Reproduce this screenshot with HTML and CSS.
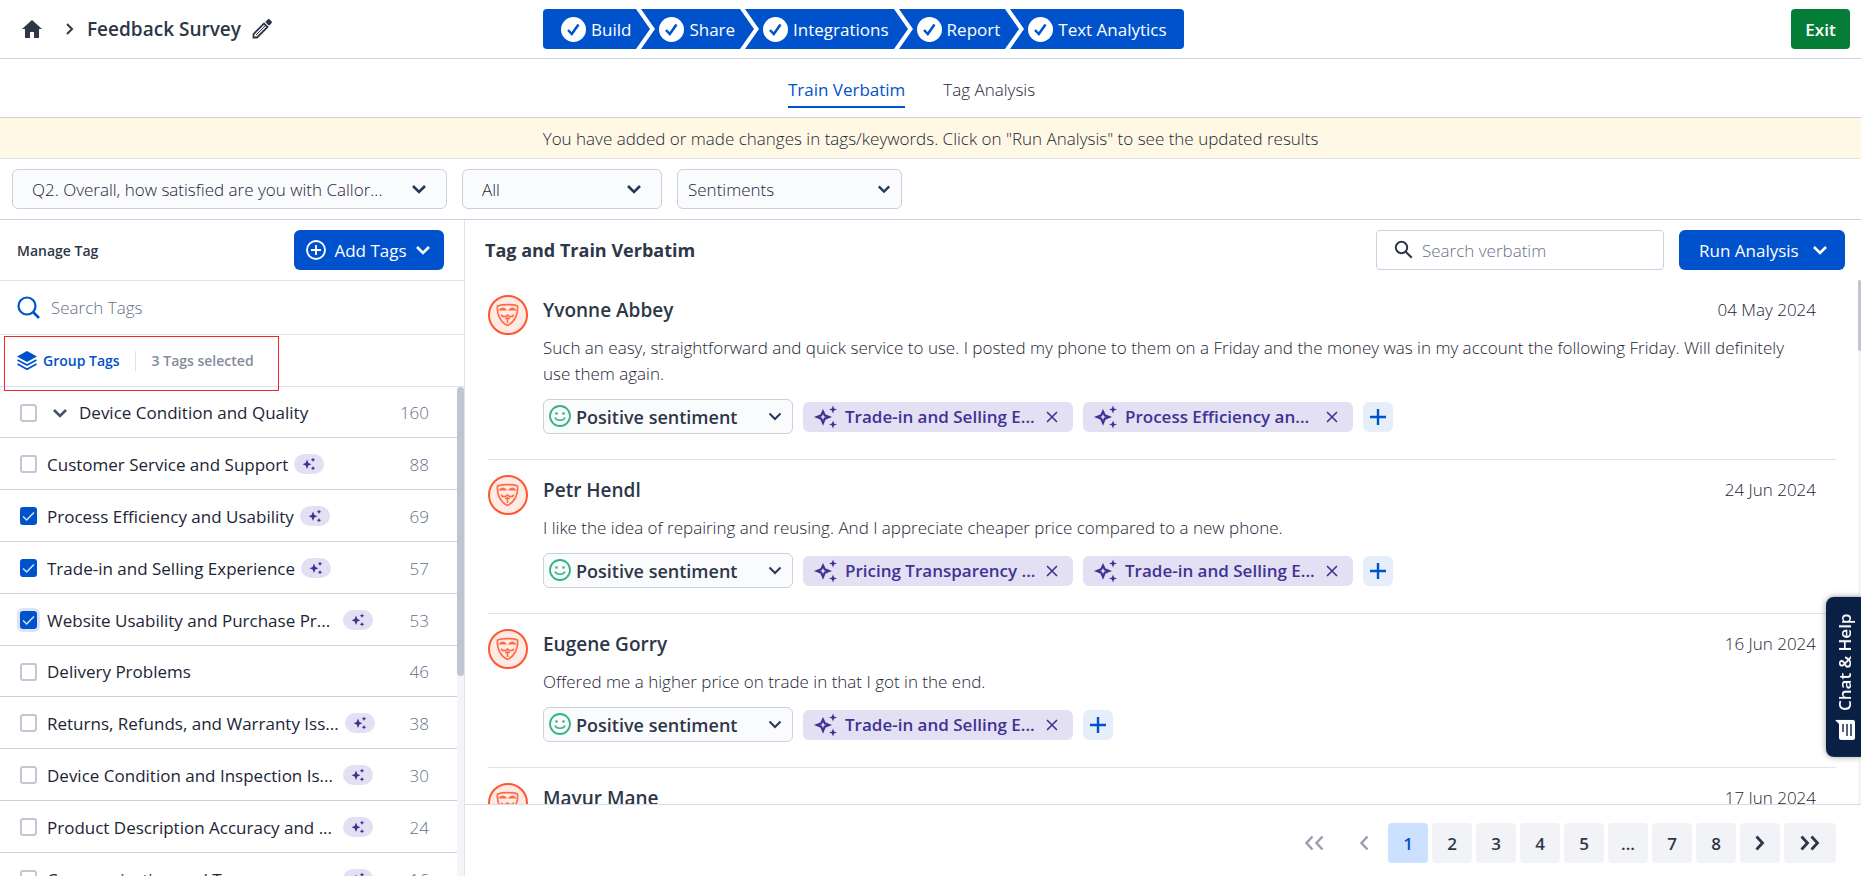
FILE: index.html
```html
<!DOCTYPE html>
<html lang="en">
<head>
  <meta charset="UTF-8" />
  <meta name="viewport" content="width=device-width, initial-scale=1.0" />
  <title>Feedback Survey - Text Analytics</title>
  <link rel="stylesheet" href="styles.css">
</head>
<body>

  <!-- icon set -->
  <svg class="icon-defs" aria-hidden="true">
    <symbol id="i-chevron" viewBox="0 0 16 10"><path d="M2 2l6 6 6-6" fill="none" stroke="currentColor" stroke-width="2.6"/></symbol>
    <symbol id="i-chevron-thin" viewBox="0 0 14 9"><path d="M1.5 1.5L7 7l5.500-5.500" fill="none" stroke="currentColor" stroke-width="2"/></symbol>
    <symbol id="i-check" viewBox="0 0 25 25"><circle cx="12.500" cy="12.500" r="12.500" fill="#fff"/><path d="M7 13l3.800 4L17.500 7.500" fill="none" stroke="#0052cc" stroke-width="2.500"/></symbol>
    <symbol id="i-sep" viewBox="0 0 21 40"><path d="M0 0H1L15 20 1 40H0z" fill="#0052cc"/><path d="M6 0H21V40H6L20 20z" fill="#0052cc"/></symbol>
    <symbol id="i-stars" viewBox="0 0 24 24"><path d="M9 6.500l1.800 3.900 4.200 1.600-4.200 1.700L9 18l-1.800-4.300L3 12l4.200-1.600z" fill="none" stroke="currentColor" stroke-width="2.200"/><path d="M19 .5l1.100 2.900L23 4.500l-2.900 1.100L19 8.500l-1.100-2.900L15 4.500l2.900-1.100zM19 15.500l1.100 2.900 2.900 1.100-2.900 1.100-1.100 2.900-1.100-2.900-2.900-1.100 2.900-1.100z" fill="currentColor"/></symbol>
    <symbol id="i-stars-solid" viewBox="0 0 14 14"><path d="M5 2.500l1.400 3.400L9.500 7.200 6.400 8.500 5 12 3.600 8.500.5 7.200l3.100-1.300zM11 .5l.7 1.600 1.600.7-1.600.7L11 5l-.7-1.500-1.600-.7 1.600-.7zM11 9l.7 1.600 1.600.7-1.600.7-.7 1.600-.7-1.600-1.600-.7 1.600-.7z" fill="currentColor"/></symbol>
    <symbol id="i-close" viewBox="0 0 12 12"><path d="M1 1l10 10M11 1L1 11" fill="none" stroke="currentColor" stroke-width="1.600"/></symbol>
    <symbol id="i-plus" viewBox="0 0 18 18"><path d="M9 1v16M1 9h16" fill="none" stroke="currentColor" stroke-width="2.400"/></symbol>
    <symbol id="i-smile" viewBox="0 0 22 22"><circle cx="11" cy="11" r="10" fill="none" stroke="currentColor" stroke-width="1.800"/><path d="M6 12.500c1.500 3.700 8.500 3.700 10 0" fill="none" stroke="currentColor" stroke-width="1.500"/><circle cx="7.500" cy="8.500" r="1.300" fill="currentColor"/><circle cx="14.500" cy="8.500" r="1.300" fill="currentColor"/></symbol>
    <symbol id="i-avatar" viewBox="0 0 40 40">
      <circle cx="20" cy="20" r="19" fill="#ffebe6" stroke="#ff5630" stroke-width="2"/>
      <path d="M9.500 11c5-1.800 16-1.800 20 0 .8 8-2.500 16-10 19.500C12 27 8.700 19 9.500 11z" fill="none" stroke="#ff6b45" stroke-width="1.700" stroke-linejoin="round"/>
      <path d="M12 14.800c1.500-2 4-2 5.500 0zM21.500 14.800c1.500-2 4-2 5.500 0zM13.500 19.500c0 3 4.500 2.500 6 .5 1.500 2 6 2.500 6-.5M17 23.500h5M19.500 22v6" fill="none" stroke="#ff6b45" stroke-width="1.600"/>
    </symbol>
    <symbol id="i-search" viewBox="0 0 20 20"><circle cx="7.500" cy="7.500" r="5.700" fill="none" stroke="currentColor" stroke-width="2"/><path d="M11.700 11.700l6 6" stroke="currentColor" stroke-width="2.200"/></symbol>
    <symbol id="i-left" viewBox="0 0 10 16"><path d="M8.500 1.500L2.500 8l6 6.500" fill="none" stroke="currentColor" stroke-width="2.500"/></symbol>
    <symbol id="i-right" viewBox="0 0 10 16"><path d="M1.500 1.500L7.500 8l-6 6.500" fill="none" stroke="currentColor" stroke-width="2.800"/></symbol>
  </svg>

  <header class="topbar">
    <div class="crumbs">
      <a href="#" class="home" aria-label="Home"><svg width="20" height="18" viewBox="0 0 20 18"><path d="M10 0L0 9h3v9h5v-6h4v6h5V9h3z" fill="currentColor"/></svg></a>
      <svg class="crumb-arrow" width="8" height="12" viewBox="0 0 8 12"><path d="M1 1l5 5-5 5" fill="none" stroke="currentColor" stroke-width="2"/></svg>
      <h1>Feedback Survey</h1>
      <button class="plain" aria-label="Rename"><svg width="20" height="20" viewBox="0 0 20 20"><path d="M1.500 18.500V15L12 4.500 15.500 8 5 18.500z" fill="none" stroke="currentColor" stroke-width="1.800"/><path d="M4 16L13 7" stroke="currentColor" stroke-width="1"/><path d="M13.300 3l2.500-2.500c.6-.6 1.300-.6 1.900 0l1.800 1.800c.6.600.6 1.300 0 1.900L17 6.700z" fill="currentColor"/></svg></button>
    </div>
    <nav class="stepper">
      <a href="#"><svg class="check"><use href="#i-check"/></svg>Build</a>
      <svg class="sep"><use href="#i-sep"/></svg>
      <a href="#"><svg class="check"><use href="#i-check"/></svg>Share</a>
      <svg class="sep"><use href="#i-sep"/></svg>
      <a href="#"><svg class="check"><use href="#i-check"/></svg>Integrations</a>
      <svg class="sep"><use href="#i-sep"/></svg>
      <a href="#"><svg class="check"><use href="#i-check"/></svg>Report</a>
      <svg class="sep"><use href="#i-sep"/></svg>
      <a href="#"><svg class="check"><use href="#i-check"/></svg>Text Analytics</a>
    </nav>
    <button class="exit">Exit</button>
  </header>

  <nav class="tabs">
    <a href="#" class="tab current">Train Verbatim</a>
    <a href="#" class="tab">Tag Analysis</a>
  </nav>

  <div class="notice">You have added or made changes in tags/keywords. Click on "Run Analysis" to see the updated results</div>

  <div class="filters">
    <div class="select question">
      <select aria-label="Question"><option>Q2. Overall, how satisfied are you with Callor...</option></select>
      <svg class="chev"><use href="#i-chevron"/></svg>
    </div>
    <div class="select scope">
      <select aria-label="Responses"><option>All</option></select>
      <svg class="chev"><use href="#i-chevron"/></svg>
    </div>
    <div class="select sentiments">
      <select aria-label="Sentiments"><option>Sentiments</option></select>
      <svg class="chev"><use href="#i-chevron"/></svg>
    </div>
  </div>

  <div class="workspace">

    <aside class="sidebar">
      <div class="manage">
        <h2>Manage Tag</h2>
        <button class="btn add"><svg width="20" height="20" viewBox="0 0 20 20"><circle cx="10" cy="10" r="9" fill="none" stroke="#fff" stroke-width="1.800"/><path d="M10 5v10M5 10h10" stroke="#fff" stroke-width="1.800"/></svg>Add Tags<svg class="chev"><use href="#i-chevron"/></svg></button>
      </div>
      <div class="tag-search">
        <svg width="23" height="23" viewBox="0 0 23 23"><circle cx="10" cy="10" r="8.500" fill="none" stroke="#0052cc" stroke-width="2.200"/><path d="M16 16l6 6" stroke="#0052cc" stroke-width="2.600"/></svg>
        <input type="text" placeholder="Search Tags" aria-label="Search Tags">
      </div>
      <div class="group">
        <button class="group-btn"><svg width="20" height="20" viewBox="0 0 20 20"><path d="M10 0l10 5.500L10 11 0 5.500z" fill="#0052cc"/><path d="M.5 9L10 14l9.500-5M.5 13L10 18.300 19.500 13" fill="none" stroke="#0052cc" stroke-width="1.700"/></svg>Group Tags</button>
        <span class="selected">3 Tags selected</span>
        <div class="highlight"></div>
      </div>
      <div class="tag-scroll">
        <ul class="tag-list">
          <li>
            <input type="checkbox" id="t1"><button class="plain expand" aria-label="Expand"><svg class="chev"><use href="#i-chevron"/></svg></button>
            <label for="t1">Device Condition and Quality</label><span class="count">160</span>
          </li>
          <li><input type="checkbox" id="t2"><label for="t2">Customer Service and Support</label><span class="ai"><svg><use href="#i-stars-solid"/></svg></span><span class="count">88</span></li>
          <li><input type="checkbox" id="t3" checked><label for="t3">Process Efficiency and Usability</label><span class="ai"><svg><use href="#i-stars-solid"/></svg></span><span class="count">69</span></li>
          <li><input type="checkbox" id="t4" checked><label for="t4">Trade-in and Selling Experience</label><span class="ai"><svg><use href="#i-stars-solid"/></svg></span><span class="count">57</span></li>
          <li><input type="checkbox" id="t5" class="focused" checked><label for="t5" class="long">Website Usability and Purchase Pr...</label><span class="ai"><svg><use href="#i-stars-solid"/></svg></span><span class="count">53</span></li>
          <li><input type="checkbox" id="t6"><label for="t6">Delivery Problems</label><span class="count">46</span></li>
          <li><input type="checkbox" id="t7"><label for="t7" class="long">Returns, Refunds, and Warranty Iss...</label><span class="ai"><svg><use href="#i-stars-solid"/></svg></span><span class="count">38</span></li>
          <li><input type="checkbox" id="t8"><label for="t8" class="long">Device Condition and Inspection Is...</label><span class="ai"><svg><use href="#i-stars-solid"/></svg></span><span class="count">30</span></li>
          <li><input type="checkbox" id="t9"><label for="t9" class="long">Product Description Accuracy and ...</label><span class="ai"><svg><use href="#i-stars-solid"/></svg></span><span class="count">24</span></li>
          <li><input type="checkbox" id="t10"><label for="t10" class="long">Communication and Transparen...</label><span class="ai"><svg><use href="#i-stars-solid"/></svg></span><span class="count">16</span></li>
        </ul>
        <div class="track"><div class="thumb"></div></div>
      </div>
    </aside>

    <main class="main">
      <div class="main-head">
        <h2>Tag and Train Verbatim</h2>
        <div class="search">
          <svg width="20" height="20"><use href="#i-search"/></svg>
          <input type="text" placeholder="Search verbatim" aria-label="Search verbatim">
        </div>
        <button class="btn run">Run Analysis<svg class="chev"><use href="#i-chevron"/></svg></button>
      </div>

      <div class="verbatims">
        <div class="list">
          <article class="item">
            <svg class="avatar"><use href="#i-avatar"/></svg>
            <div class="body">
              <div class="who"><h3>Yvonne Abbey</h3><time>04 May 2024</time></div>
              <p>Such an easy, straightforward and quick service to use. I posted my phone to them on a Friday and the money was in my account the following Friday. Will definitely use them again.</p>
              <div class="tags">
                <div class="sentiment"><svg class="smile"><use href="#i-smile"/></svg><select aria-label="Sentiment"><option>Positive sentiment</option></select><svg class="chev-sm"><use href="#i-chevron-thin"/></svg></div>
                <div class="chip"><svg class="stars"><use href="#i-stars"/></svg><span>Trade-in and Selling E...</span><button class="plain" aria-label="Remove tag"><svg class="x"><use href="#i-close"/></svg></button></div>
                <div class="chip"><svg class="stars"><use href="#i-stars"/></svg><span>Process Efficiency an...</span><button class="plain" aria-label="Remove tag"><svg class="x"><use href="#i-close"/></svg></button></div>
                <button class="plus" aria-label="Add tag"><svg><use href="#i-plus"/></svg></button>
              </div>
            </div>
          </article>
          <article class="item">
            <svg class="avatar"><use href="#i-avatar"/></svg>
            <div class="body">
              <div class="who"><h3>Petr Hendl</h3><time>24 Jun 2024</time></div>
              <p>I like the idea of repairing and reusing. And I appreciate cheaper price compared to a new phone.</p>
              <div class="tags">
                <div class="sentiment"><svg class="smile"><use href="#i-smile"/></svg><select aria-label="Sentiment"><option>Positive sentiment</option></select><svg class="chev-sm"><use href="#i-chevron-thin"/></svg></div>
                <div class="chip"><svg class="stars"><use href="#i-stars"/></svg><span>Pricing Transparency ...</span><button class="plain" aria-label="Remove tag"><svg class="x"><use href="#i-close"/></svg></button></div>
                <div class="chip"><svg class="stars"><use href="#i-stars"/></svg><span>Trade-in and Selling E...</span><button class="plain" aria-label="Remove tag"><svg class="x"><use href="#i-close"/></svg></button></div>
                <button class="plus" aria-label="Add tag"><svg><use href="#i-plus"/></svg></button>
              </div>
            </div>
          </article>
          <article class="item">
            <svg class="avatar"><use href="#i-avatar"/></svg>
            <div class="body">
              <div class="who"><h3>Eugene Gorry</h3><time>16 Jun 2024</time></div>
              <p>Offered me a higher price on trade in that I got in the end.</p>
              <div class="tags">
                <div class="sentiment"><svg class="smile"><use href="#i-smile"/></svg><select aria-label="Sentiment"><option>Positive sentiment</option></select><svg class="chev-sm"><use href="#i-chevron-thin"/></svg></div>
                <div class="chip"><svg class="stars"><use href="#i-stars"/></svg><span>Trade-in and Selling E...</span><button class="plain" aria-label="Remove tag"><svg class="x"><use href="#i-close"/></svg></button></div>
                <button class="plus" aria-label="Add tag"><svg><use href="#i-plus"/></svg></button>
              </div>
            </div>
          </article>
          <article class="item">
            <svg class="avatar"><use href="#i-avatar"/></svg>
            <div class="body">
              <div class="who"><h3>Mayur Mane</h3><time>17 Jun 2024</time></div>
            </div>
          </article>
        </div>
        <div class="track slim"><div class="thumb"></div></div>
      </div>

      <footer class="pager">
        <button class="nav first" aria-label="First page" disabled><svg><use href="#i-left"/></svg><svg><use href="#i-left"/></svg></button>
        <button class="nav prev" aria-label="Previous page" disabled><svg><use href="#i-left"/></svg></button>
        <button class="page active">1</button>
        <button class="page">2</button>
        <button class="page">3</button>
        <button class="page">4</button>
        <button class="page">5</button>
        <button class="page">...</button>
        <button class="page">7</button>
        <button class="page">8</button>
        <button class="page" aria-label="Next page"><svg><use href="#i-right"/></svg></button>
        <button class="page last" aria-label="Last page"><svg><use href="#i-right"/></svg><svg><use href="#i-right"/></svg></button>
      </footer>
    </main>
  </div>

  <button class="chat"><svg width="20" height="20" viewBox="0 0 20 20"><path d="M2 0h12a2 2 0 012 2v14l4 4H2a2 2 0 01-2-2V2a2 2 0 012-2z" fill="#fff"/><path d="M4 4v12M8 4v12M12 8v8" stroke="#0a1f44" stroke-width="1.400"/></svg>Chat &amp; Help</button>

</body>
</html>
```

FILE: styles.css
```css
* {
  margin: 0;
  padding: 0;
  box-sizing: border-box;
}

html, body {
  height: 100%;
}

body {
  display: flex;
  flex-direction: column;
  overflow: hidden;
  font-family: 'Segoe UI', 'Open Sans', 'Noto Sans', sans-serif;
  font-size: 17px;
  font-weight: 300;
  color: #1c2536;
  background-color: #fff;
}

button, input, select {
  font: inherit;
  color: inherit;
}

button {
  border: none;
  cursor: pointer;
}

a {
  color: inherit;
  text-decoration: none;
}

svg {
  flex: none;
  display: block;
}

.icon-defs {
  position: absolute;
  width: 0;
  height: 0;
}

.plain {
  background: none;
}

.chev {
  width: 16px;
  height: 10px;
}

/* top bar */
.topbar {
  flex: none;
  display: flex;
  align-items: center;
  height: 59px;
  padding-right: 11px;
  border-bottom: 1px solid #cbd0e0;
}

.crumbs {
  display: flex;
  align-items: center;
  flex: 0 0 543px;
  padding-left: 22px;
  color: #2d3748;
}

.crumb-arrow {
  margin: 0 13px 0 24px;
}

.crumbs h1 {
  font-size: 19px;
  font-weight: 600;
  margin-right: 11px;
}

.stepper {
  display: flex;
  height: 40px;
  border-radius: 4px;
  overflow: hidden;
}

.stepper a {
  display: flex;
  align-items: center;
  gap: 5px;
  padding: 0 4px 0 3px;
  background-color: #0052cc;
  color: #fff;
  font-weight: 500;
}

.stepper a:first-child {
  padding-left: 18px;
}

.stepper a:last-child {
  padding-right: 17px;
}

.check {
  width: 25px;
  height: 25px;
}

.sep {
  width: 21px;
  height: 40px;
}

.exit {
  margin-left: auto;
  width: 59px;
  height: 40px;
  border-radius: 4px;
  background-color: #067d37;
  color: #fff;
  font-weight: 600;
}

/* tabs */
.tabs {
  flex: none;
  display: flex;
  justify-content: center;
  gap: 38px;
  height: 59px;
  padding: 15px 38px 0 0;
  border-bottom: 1px solid #cbd0e0;
}

.tab {
  height: 34px;
  line-height: 32px;
}

.tab.current {
  color: #0052cc;
  font-weight: 500;
  border-bottom: 2px solid #0052cc;
}

.notice {
  flex: none;
  height: 41px;
  line-height: 42px;
  text-align: center;
  background-color: #fff8e5;
  border-bottom: 1px solid #dfe1ec;
}

/* filters */
.filters {
  flex: none;
  display: flex;
  gap: 15px;
  padding: 10px 12px;
  border-bottom: 1px solid #cbd0e0;
}

.select {
  position: relative;
  height: 40px;
}

.select select {
  appearance: none;
  width: 100%;
  height: 100%;
  padding-left: 19px;
  border: 1px solid #cbd0e0;
  border-radius: 6px;
  background-color: #fafbfd;
}

.select .chev {
  position: absolute;
  right: 20px;
  top: 15px;
  color: #253858;
  pointer-events: none;
}

.question { width: 435px; }
.scope { width: 200px; }
.sentiments { width: 225px; }

.sentiments select {
  padding-left: 10px;
}

.sentiments .chev {
  right: 11px;
  width: 14px;
}

.workspace {
  flex: 1;
  display: flex;
  min-height: 0;
}

/* sidebar */
.sidebar {
  flex: none;
  display: flex;
  flex-direction: column;
  width: 465px;
  border-right: 1px solid #dfe3ee;
}

.manage, .tag-search, .group {
  flex: none;
  display: flex;
  align-items: center;
  padding-left: 17px;
  border-bottom: 1px solid #dfe3ee;
}

.manage {
  height: 61px;
  padding-right: 20px;
  justify-content: space-between;
}

.manage h2 {
  font-size: 14px;
  font-weight: 600;
  color: #2d3748;
}

.btn {
  display: flex;
  align-items: center;
  height: 40px;
  border-radius: 6px;
  background-color: #0052cc;
  color: #fff;
  font-weight: 400;
}

.add {
  width: 150px;
  padding: 0 13px 0 12px;
  justify-content: space-between;
}

.tag-search {
  height: 54px;
  gap: 11px;
}

.tag-search input {
  flex: 1;
  min-width: 0;
  border: none;
  outline: none;
}

::placeholder {
  color: #667085;
  opacity: 1;
}

.group {
  position: relative;
  height: 52px;
  font-size: 14px;
  font-weight: 600;
}

.group-btn {
  display: flex;
  align-items: center;
  gap: 6px;
  padding-right: 15px;
  background: none;
  color: #0052cc;
  border-right: 1px solid #dfe3ee;
}

.selected {
  padding-left: 16px;
  color: #858c9c;
}

.highlight {
  position: absolute;
  left: 4px;
  top: 1px;
  width: 275px;
  height: 55px;
  border: 1px solid #f02828;
  z-index: 1;
}

.tag-scroll {
  flex: 1;
  display: flex;
  min-height: 0;
}

.tag-list {
  flex: 1;
  list-style: none;
  overflow: hidden;
}

.tag-list li {
  display: flex;
  align-items: center;
  height: 52px;
  padding: 1px 28px 0 20px;
  border-bottom: 1px solid #cbd0e0;
  font-weight: 500;
  white-space: nowrap;
}

/* rows without a badge are slightly shorter */
.tag-list li:not(:has(.ai)) {
  height: 51px;
}

.tag-list input {
  appearance: none;
  width: 17px;
  height: 18px;
  margin-right: 10px;
  border: 2px solid #c1c7d3;
  border-radius: 3px;
  background-color: #fff;
}

.tag-list input:checked {
  border-color: #0052cc;
  background: #0052cc url("data:image/svg+xml,%3Csvg xmlns='http://www.w3.org/2000/svg' viewBox='0 0 14 14'%3E%3Cpath d='M1.500 7.500l3.500 3.500 7-7.500' fill='none' stroke='%23cfe0fa' stroke-width='1.500'/%3E%3C/svg%3E") center / 14px no-repeat;
}

.tag-list input.focused {
  box-shadow: 0 0 0 3px #dfe3f6;
}

.expand {
  margin: 0 11px 0 5px;
  color: #42526e;
}

.long {
  min-width: 290px;
}

.ai {
  display: flex;
  align-items: center;
  justify-content: center;
  width: 30px;
  height: 20px;
  margin-left: 6px;
  border-radius: 10px;
  background-color: #e4e0f3;
  color: #403294;
}

.ai svg {
  width: 14px;
  height: 14px;
}

.count {
  margin-left: auto;
  color: #667085;
  font-weight: 300;
}

.track {
  width: 7px;
  background-color: #f4f5f8;
}

.thumb {
  height: 59%;
  border-radius: 4px;
  background-color: #c0c6d1;
}

/* main column */
.main {
  flex: 1;
  display: flex;
  flex-direction: column;
  min-width: 0;
}

.main-head {
  flex: none;
  display: flex;
  align-items: center;
  height: 60px;
  padding: 0 16px 0 20px;
}

.main-head h2 {
  font-size: 18px;
  font-weight: 700;
  color: #2d3748;
}

.search {
  display: flex;
  align-items: center;
  gap: 8px;
  width: 288px;
  height: 40px;
  margin: 0 15px 0 auto;
  padding-left: 17px;
  border: 1px solid #cbd0e0;
  border-radius: 4px;
  color: #2d3748;
}

.search input {
  flex: 1;
  min-width: 0;
  border: none;
  outline: none;
}

.run {
  width: 166px;
  padding: 0 17px 0 20px;
  justify-content: space-between;
}

.verbatims {
  flex: 1;
  display: flex;
  min-height: 0;
}

.list {
  flex: 1;
  padding: 0 22px 0 23px;
  overflow: hidden;
}

.slim {
  width: 3px;
}

.slim .thumb {
  height: 71px;
}

.item {
  display: flex;
  gap: 15px;
  padding: 15px 20px 25px 0;
  border-bottom: 1px solid #dfe3ee;
}

.avatar {
  width: 40px;
  height: 40px;
}

.body {
  flex: 1;
}

.who {
  display: flex;
  justify-content: space-between;
  height: 30px;
  line-height: 30px;
}

.who h3 {
  font-size: 19px;
  font-weight: 600;
  color: #2d3748;
}

.item p {
  margin: 10px 0 12px;
  padding-right: 8px;
  line-height: 26px;
}

.tags {
  display: flex;
  align-items: center;
  gap: 10px;
}

.sentiment {
  position: relative;
  width: 250px;
  height: 35px;
}

.sentiment select {
  appearance: none;
  width: 100%;
  height: 100%;
  padding-left: 32px;
  border: 1px solid #cbd0e0;
  border-radius: 6px;
  background-color: #fafbfd;
  font-size: 18px;
  font-weight: 600;
  color: #2d3748;
}

.smile {
  position: absolute;
  left: 6px;
  top: 6px;
  width: 22px;
  height: 22px;
  color: #36b37e;
}

.chev-sm {
  position: absolute;
  right: 11px;
  top: 13px;
  width: 14px;
  height: 9px;
  color: #253858;
  pointer-events: none;
}

.chip {
  display: flex;
  align-items: center;
  width: 270px;
  height: 30px;
  padding: 0 15px 0 11px;
  border-radius: 6px;
  background-color: #e4e0f3;
  color: #403294;
  font-weight: 600;
}

.stars {
  width: 24px;
  height: 24px;
  margin-right: 7px;
}

.chip button {
  margin-left: auto;
  color: #403294;
}

.x {
  width: 12px;
  height: 12px;
}

.plus {
  display: flex;
  align-items: center;
  justify-content: center;
  width: 30px;
  height: 30px;
  border-radius: 6px;
  background-color: #e6eefa;
  color: #0052cc;
}

.plus svg {
  width: 18px;
  height: 18px;
}

/* pagination */
.pager {
  flex: none;
  display: flex;
  justify-content: flex-end;
  gap: 4px;
  padding: 18px 25px 13px;
  border-top: 1px solid #d8dbe5;
}

.pager button {
  display: flex;
  align-items: center;
  justify-content: center;
  width: 40px;
  height: 40px;
  border-radius: 4px;
  background-color: #f2f3f7;
  color: #2d3748;
  font-weight: 600;
}

.pager svg {
  width: 10px;
  height: 16px;
}

.pager .nav {
  background: none;
  color: #9a9fac;
}

.pager .first {
  margin-right: 6px;
}

.pager .active {
  background-color: #cce0ff;
  color: #0052cc;
}

.pager .last {
  width: 52px;
}

/* chat tab on the right edge */
.chat {
  position: fixed;
  right: 0;
  top: 597px;
  display: flex;
  align-items: center;
  justify-content: center;
  gap: 9px;
  width: 35px;
  height: 160px;
  padding-right: 3px;
  border-radius: 0 8px 8px 0;
  background-color: #0a1f44;
  box-shadow: 0 0 6px rgba(0, 0, 0, 0.4);
  color: #fff;
  font-weight: 600;
  writing-mode: vertical-rl;
  transform: rotate(180deg);
}
```
